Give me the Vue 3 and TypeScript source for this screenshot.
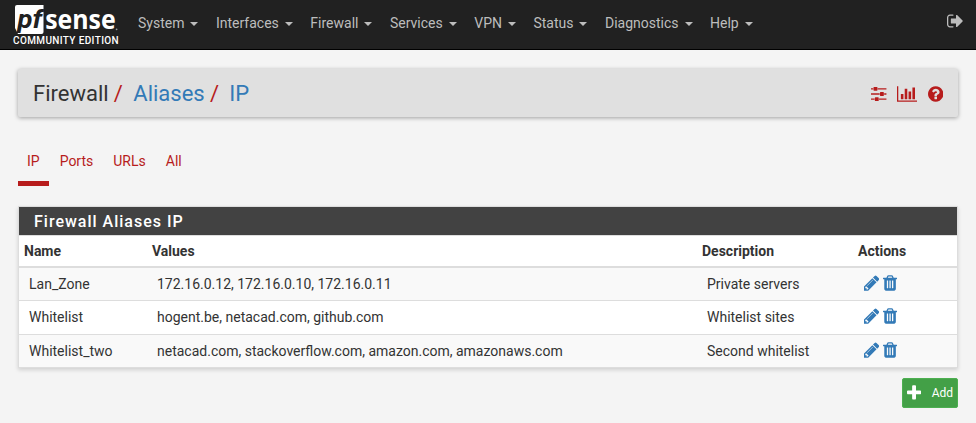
<script setup lang="ts">
interface Alias {
  name: string
  values: string
  description: string
}

const menu: string[] = ['System', 'Interfaces', 'Firewall', 'Services', 'VPN', 'Status', 'Diagnostics', 'Help']
const tabs: string[] = ['IP', 'Ports', 'URLs', 'All']
const activeTab = 'IP'

const aliases: Alias[] = [
  { name: 'Lan_Zone', values: '172.16.0.12, 172.16.0.10, 172.16.0.11', description: 'Private servers' },
  { name: 'Whitelist', values: 'hogent.be, netacad.com, github.com', description: 'Whitelist sites' },
  { name: 'Whitelist_two', values: 'netacad.com, stackoverflow.com, amazon.com, amazonaws.com', description: 'Second whitelist' },
]
</script>

<template>
  <div class="page">
    <header class="navbar">
      <a class="brand">
        <svg class="logo" width="106" height="32" viewBox="0 0 106 32">
          <path d="M4 1H30.5V28Q30.5 30 28.5 30H5L2 24V3Q2 1 4 1Z" fill="#fff" />
          <text class="pf" x="4.5" y="24.3" textLength="24.5" lengthAdjust="spacingAndGlyphs">pf</text>
          <text class="sense" x="32.2" y="24.8" textLength="70.5" lengthAdjust="spacingAndGlyphs">sense</text>
          <circle cx="103.6" cy="25.3" r="0.9" fill="#999" />
        </svg>
        <span class="edition">COMMUNITY EDITION</span>
      </a>
      <nav class="menu">
        <a v-for="item in menu" :key="item">{{ item }}<i class="caret"></i></a>
      </nav>
      <svg class="logout" width="16" height="18" viewBox="64 0 1593 1792" aria-label="Logout">
        <path d="M704 1440q0 4 1 20t.5 26.5-3 23.5-10 19.5-20.5 6.5h-320q-119 0-203.5-84.5t-84.5-203.5v-704q0-119 84.5-203.5t203.5-84.5h320q13 0 22.5 9.5t9.5 22.5q0 4 1 20t.5 26.5-3 23.5-10 19.5-20.5 6.5h-320q-66 0-113 47t-47 113v704q0 66 47 113t113 47h312l11.5 1 11.5 3 8 5.5 7 9 2 13.5zm928-544q0 26-19 45l-544 544q-19 19-45 19t-45-19-19-45v-288h-448q-26 0-45-19t-19-45v-384q0-26 19-45t45-19h448v-288q0-26 19-45t45-19 45 19l544 544q19 19 19 45z" />
      </svg>
    </header>

    <main class="content">
      <section class="titlebar">
        <h1 class="crumbs">
          <span>Firewall</span><b>/</b><a>Aliases</a><b>/</b><a>IP</a>
        </h1>
        <div class="shortcuts">
          <svg width="15.43" height="18" viewBox="0 64 1536 1792">
            <path d="M352 1408v128h-352v-128h352zm352-128q26 0 45 19t19 45v256q0 26-19 45t-45 19h-256q-26 0-45-19t-19-45v-256q0-26 19-45t45-19h256zm160-384v128h-864v-128h864zm-640-512v128h-224v-128h224zm1312 1024v128h-736v-128h736zm-960-1152q26 0 45 19t19 45v256q0 26-19 45t-45 19h-256q-26 0-45-19t-19-45v-256q0-26 19-45t45-19h256zm640 512q26 0 45 19t19 45v256q0 26-19 45t-45 19h-256q-26 0-45-19t-19-45v-256q0-26 19-45t45-19h256zm320 128v128h-224v-128h224zm0-512v128h-864v-128h864z" />
          </svg>
          <svg width="20.57" height="18" viewBox="0 0 2048 1792">
            <path d="M640 896v512h-256v-512h256zm384-512v1024h-256v-1024h256zm1024 1152v128h-2048v-1536h128v1408h1920zm-640-896v768h-256v-768h256zm384-384v1152h-256v-1152h256z" />
          </svg>
          <svg width="15.43" height="18" viewBox="128 0 1536 1792">
            <path d="M1024 1376v-192q0-14-9-23t-23-9h-192q-14 0-23 9t-9 23v192q0 14 9 23t23 9h192q14 0 23-9t9-23zm256-672q0-88-55.5-163t-138.5-116-170-41q-243 0-371 213-15 24 8 42l132 100q7 6 19 6 16 0 25-12 53-68 86-92 34-24 86-24 48 0 85.5 26t37.5 59q0 38-20 61t-68 45q-63 28-115.5 86.5t-52.5 125.5v36q0 14 9 23t23 9h192q14 0 23-9t9-23q0-19 21.5-49.5t54.5-49.5q32-18 49-28.5t46-35 44.5-48 28-60.5 12.5-81zm384 192q0 209-103 385.5t-279.5 279.5-385.5 103-385.5-103-279.5-279.5-103-385.5 103-385.5 279.5-279.5 385.5-103 385.5 103 279.5 279.5 103 385.5z" />
          </svg>
        </div>
      </section>

      <ul class="tabs">
        <li v-for="tab in tabs" :key="tab" :class="{ active: tab === activeTab }">{{ tab }}</li>
      </ul>

      <section class="panel">
        <h2>Firewall Aliases IP</h2>
        <table>
          <colgroup>
            <col class="c-name" /><col class="c-values" /><col class="c-desc" /><col />
          </colgroup>
          <thead>
            <tr><th>Name</th><th>Values</th><th>Description</th><th>Actions</th></tr>
          </thead>
          <tbody>
            <tr v-for="alias in aliases" :key="alias.name">
              <td>{{ alias.name }}</td>
              <td>{{ alias.values }}</td>
              <td>{{ alias.description }}</td>
              <td>
                <div class="actions">
                  <svg width="15.43" height="18" viewBox="128 0 1536 1792">
                    <path d="M491 1536l91-91-235-235-91 91v107h128v128h107zm523-928q0-22-22-22-10 0-17 7l-542 542q-7 7-7 17 0 22 22 22 10 0 17-7l542-542q7-7 7-17zm-54-192l416 416-832 832h-416v-416zm683 96q0 53-37 90l-166 166-416-416 166-165q36-38 90-38 53 0 91 38l235 234q37 39 37 91z" />
                  </svg>
                  <svg width="14.14" height="18" viewBox="192 0 1408 1792">
                    <path d="M704 1376v-704q0-14-9-23t-23-9h-64q-14 0-23 9t-9 23v704q0 14 9 23t23 9h64q14 0 23-9t9-23zm256 0v-704q0-14-9-23t-23-9h-64q-14 0-23 9t-9 23v704q0 14 9 23t23 9h64q14 0 23-9t9-23zm256 0v-704q0-14-9-23t-23-9h-64q-14 0-23 9t-9 23v704q0 14 9 23t23 9h64q14 0 23-9t9-23zm-544-992h448l-48-117q-7-9-17-11h-317q-10 2-17 11zm928 32v64q0 14-9 23t-23 9h-96v948q0 83-47 143.5t-113 60.5h-832q-66 0-113-58.5t-47-141.5v-952h-96q-14 0-23-9t-9-23v-64q0-14 9-23t23-9h309l70-167q15-37 54-63t79-26h320q40 0 79 26t54 63l70 167h309q14 0 23 9t9 23z" />
                  </svg>
                </div>
              </td>
            </tr>
          </tbody>
        </table>
      </section>

      <div class="footer-actions">
        <button class="add" type="button">
          <svg width="14.14" height="18" viewBox="192 0 1408 1792">
            <path d="M1600 736v192q0 40-28 68t-68 28h-416v416q0 40-28 68t-68 28h-192q-40 0-68-28t-28-68v-416h-416q-40 0-68-28t-28-68v-192q0-40 28-68t68-28h416v-416q0-40 28-68t68-28h192q40 0 68 28t28 68v416h416q40 0 68 28t28 68z" />
          </svg>
          <span>Add</span>
        </button>
      </div>
    </main>
  </div>
</template>

<style>
body {
  margin: 0;
  background: #f4f4f4;
}
</style>

<style scoped>
.page {
  box-sizing: border-box;
  height: 423px;
  overflow: hidden;
  background: #f4f4f4;
  color: #333;
  font: 14px/20px Roboto, sans-serif;
}
svg {
  display: block;
  flex: none;
  fill: currentColor;
}
.navbar {
  display: flex;
  box-sizing: border-box;
  height: 50px;
  padding: 0 13px;
  background: #212121;
  border-bottom: 1px solid #000;
  color: #bdbdbd;
}
.brand {
  width: 106px;
  padding-top: 4px;
  color: #fff;
}
.logo {
  overflow: visible;
}
.pf {
  font: italic 700 26px Roboto, sans-serif;
  fill: #212121;
}
.sense {
  font: 700 26px "Open Sans", sans-serif;
  fill: #fff;
}
.edition {
  display: block;
  font-size: 10px;
  line-height: 10px;
  letter-spacing: 0.37px;
  white-space: nowrap;
  font-weight: 500;
}
.menu {
  display: flex;
  gap: 17.5px;
  padding: 13px 0 0 19px;
}
.menu a {
  display: flex;
  align-items: center;
  height: 20px;
}
.caret {
  margin: 1px 0 0 6px;
  border: 4px solid transparent;
  border-top-color: currentColor;
  border-bottom: 0;
}
.logout {
  margin: 12px 0 0 auto;
}
.content {
  padding: 19px 18px 0;
}
.titlebar {
  display: flex;
  align-items: center;
  justify-content: space-between;
  box-sizing: border-box;
  height: 48px;
  padding: 1px 15px 0;
  background: #e0e0e0;
  border-radius: 2px;
  box-shadow: 0 1px 4px rgba(0, 0, 0, 0.35);
}
.crumbs {
  display: flex;
  margin: 0;
  padding-top: 1px;
  font-size: 22px;
  line-height: 26px;
  font-weight: 400;
}
.crumbs b {
  margin: 0 10.4px 0 5.2px;
  color: #b71c1c;
  font-weight: 400;
}
.crumbs a {
  color: #337ab7;
}
.shortcuts {
  display: flex;
  gap: 10.2px;
  color: #b71c1c;
}
.tabs {
  display: flex;
  gap: 2px;
  height: 39px;
  margin: 30px 0 20px;
  padding: 0;
  list-style: none;
  color: #b71c1c;
}
.tabs li {
  box-sizing: border-box;
  padding: 4px 9px 0;
  border-bottom: 5px solid transparent;
}
.tabs .active {
  border-bottom-color: #b71c1c;
}
.panel {
  border: 1px solid #ddd;
  background: #fff;
  box-shadow: 0 2px 4px rgba(0, 0, 0, 0.15);
}
.panel h2 {
  height: 28px;
  margin: 0;
  padding-left: 15px;
  background: #424242;
  color: #fff;
  font-size: 16px;
  line-height: 29px;
  font-weight: 500;
  letter-spacing: 1px;
}
table {
  width: 100%;
  table-layout: fixed;
  border-collapse: separate;
  border-spacing: 0;
}
.c-name {
  width: 128px;
}
.c-values {
  width: 550px;
}
.c-desc {
  width: 156px;
}
th {
  height: 30px;
  padding: 0 5px;
  border-top: 1px solid #ddd;
  border-bottom: 2px solid #ddd;
  text-align: left;
  font-weight: 700;
}
td {
  height: 32px;
  padding: 0 10px;
  border-bottom: 1px solid #ddd;
}
tbody tr:nth-child(2) td {
  height: 32px;
  padding-bottom: 1px;
}
tbody tr:last-child td {
  border-bottom: 0;
}
tbody tr:nth-child(odd) {
  background: #f9f9f9;
}
.actions {
  display: flex;
  gap: 4px;
  padding: 0 0 2px 0.6px;
  color: #337ab7;
}
.footer-actions {
  display: flex;
  justify-content: flex-end;
  margin-top: 10px;
}
.add {
  display: flex;
  align-items: center;
  justify-content: space-between;
  box-sizing: border-box;
  width: 56px;
  height: 30px;
  padding: 0 4px;
  background: #43a047;
  border: 1px solid #4caf50;
  border-radius: 2px;
  color: #fff;
  font: 12px/18px Roboto, sans-serif;
}
</style>
